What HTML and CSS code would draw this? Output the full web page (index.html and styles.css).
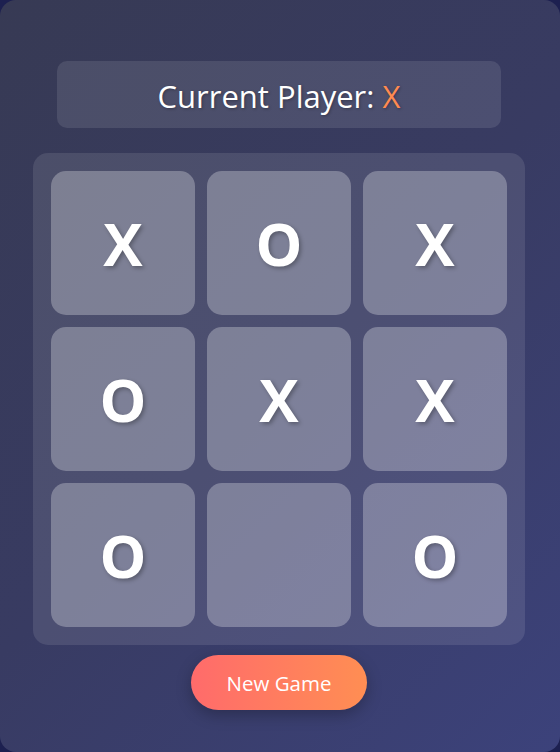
FILE: index.html
```html
<!DOCTYPE html>
<html>
<head>
<meta charset="utf-8">
<link rel="stylesheet" href="styles.css">
</head>
<body>
<div class="app">
  <div class="status">Current Player:&nbsp;<span class="player">X</span></div>
  <div class="board">
    <div class="cell">X</div>
    <div class="cell">O</div>
    <div class="cell">X</div>
    <div class="cell">O</div>
    <div class="cell">X</div>
    <div class="cell">X</div>
    <div class="cell">O</div>
    <div class="cell"></div>
    <div class="cell">O</div>
  </div>
  <button class="new-game">New Game</button>
</div>
</body>
</html>
```
FILE: styles.css
```css
html, body {
  margin: 0;
  padding: 0;
  background: #1d2050;
}
.app {
  width: 560px;
  height: 752px;
  box-sizing: border-box;
  border-radius: 16px;
  background: linear-gradient(135deg, #373a54 0%, #383b62 50%, #3c427b 100%);
  display: flex;
  flex-direction: column;
  align-items: center;
  padding-top: 61px;
  padding-right: 2px;
  font-family: "Open Sans", "Noto Sans", sans-serif;
}
.status {
  width: 444px;
  height: 67px;
  box-sizing: border-box;
  padding-top: 3px;
  border-radius: 10px;
  background: rgba(255, 255, 255, 0.1);
  color: #ffffff;
  font-size: 31px;
  display: flex;
  align-items: center;
  justify-content: center;
  text-shadow: 1px 1px 3px rgba(0, 0, 0, 0.3);
}
.player {
  color: #ff8a50;
}
.board {
  margin-top: 25px;
  width: 492px;
  box-sizing: border-box;
  padding: 18px;
  border-radius: 15px;
  background: rgba(255, 255, 255, 0.1);
  display: grid;
  grid-template-columns: repeat(3, 144px);
  grid-auto-rows: 144px;
  gap: 12px;
}
.cell {
  border-radius: 15px;
  background: rgba(255, 255, 255, 0.28);
  display: flex;
  align-items: center;
  justify-content: center;
  color: #ffffff;
  font-family: "Open Sans", sans-serif;
  font-weight: 700;
  font-size: 59px;
  text-shadow: 2px 2px 4px rgba(0, 0, 0, 0.3);
}
.new-game {
  margin-top: 10px;
  width: 176px;
  height: 55px;
  border: none;
  border-radius: 28px;
  background: linear-gradient(90deg, #ff6b6b 0%, #ff8e53 100%);
  color: #ffffff;
  font-family: "Open Sans", "Noto Sans", sans-serif;
  font-size: 20.5px;
  box-shadow: 0 5px 15px rgba(0, 0, 0, 0.25);
  padding: 0;
}
```
